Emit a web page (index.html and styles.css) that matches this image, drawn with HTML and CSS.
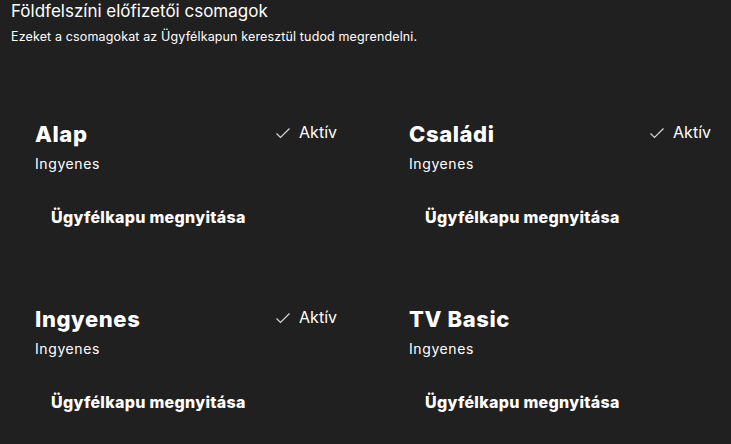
FILE: index.html
```html
<!DOCTYPE html>
<html lang="hu">
<head>
<meta charset="utf-8">
<title>Földfelszíni előfizetői csomagok</title>
<link rel="stylesheet" href="styles.css">
</head>
<body>
<header class="header">
  <h1 class="title">Földfelszíni előfizetői csomagok</h1>
  <p class="subtitle">Ezeket a csomagokat az Ügyfélkapun keresztül tudod megrendelni.</p>
</header>
<main class="grid">
  <section class="card">
    <div class="card-head">
      <h2 class="name">Alap</h2>
      <span class="status"><svg class="check" viewBox="0 0 16 12" width="16" height="12"><path d="M1.5 6.5 L5.5 10.5 L14.5 1.5" fill="none" stroke="#d8d8d8" stroke-width="1.2"/></svg>Aktív</span>
    </div>
    <div class="price">Ingyenes</div>
    <a class="btn">Ügyfélkapu megnyitása</a>
  </section>
  <section class="card">
    <div class="card-head">
      <h2 class="name">Családi</h2>
      <span class="status"><svg class="check" viewBox="0 0 16 12" width="16" height="12"><path d="M1.5 6.5 L5.5 10.5 L14.5 1.5" fill="none" stroke="#d8d8d8" stroke-width="1.2"/></svg>Aktív</span>
    </div>
    <div class="price">Ingyenes</div>
    <a class="btn">Ügyfélkapu megnyitása</a>
  </section>
  <section class="card">
    <div class="card-head">
      <h2 class="name">Ingyenes</h2>
      <span class="status"><svg class="check" viewBox="0 0 16 12" width="16" height="12"><path d="M1.5 6.5 L5.5 10.5 L14.5 1.5" fill="none" stroke="#d8d8d8" stroke-width="1.2"/></svg>Aktív</span>
    </div>
    <div class="price">Ingyenes</div>
    <a class="btn">Ügyfélkapu megnyitása</a>
  </section>
  <section class="card">
    <div class="card-head">
      <h2 class="name">TV Basic</h2>
    </div>
    <div class="price">Ingyenes</div>
    <a class="btn">Ügyfélkapu megnyitása</a>
  </section>
</main>
</body>
</html>
```
FILE: styles.css
```css
html, body {
  margin: 0;
  padding: 0;
  background: #202020;
  color: #ffffff;
  font-family: Inter, "Noto Sans", sans-serif;
}
.header {
  padding: 0 11px;
}
.title {
  margin: 0;
  font-size: 17px;
  font-weight: 400;
  line-height: 22px;
}
.subtitle {
  margin: 7px 0 0;
  font-size: 12.5px;
  letter-spacing: 0.14px;
  line-height: 16px;
}
.grid {
  display: grid;
  grid-template-columns: 302px 302px;
  column-gap: 72px;
  row-gap: 78px;
  margin: 75px 0 0 35px;
}
.card {
  display: flex;
  flex-direction: column;
  align-items: flex-start;
}
.card-head {
  display: flex;
  justify-content: space-between;
  align-items: flex-start;
  align-self: stretch;
}
.name {
  margin: 0;
  font-size: 22px;
  font-weight: 800;
  letter-spacing: 0.6px;
  line-height: 28px;
}
.status {
  display: flex;
  align-items: center;
  gap: 8px;
  padding-top: 1px;
  font-size: 16px;
  line-height: 22px;
  color: #ffffff;
}
.check {
  display: block;
  margin-top: 2px;
}
.price {
  margin-top: 6px;
  font-size: 14px;
  letter-spacing: 0.6px;
  line-height: 20px;
}
.btn {
  margin: 33px 0 0 16px;
  font-size: 16px;
  font-weight: 800;
  letter-spacing: 0.3px;
  line-height: 20px;
  color: #ffffff;
  cursor: pointer;
}
```
